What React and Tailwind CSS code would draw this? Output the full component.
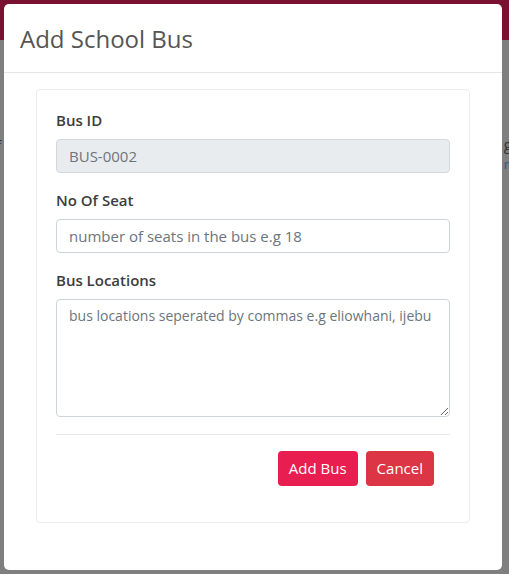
import React from "react";

const font = { fontFamily: '"Open Sans", "Noto Sans", Arial, sans-serif' };

function Field({ label, children }) {
  return (
    <div className="flex flex-col">
      <label className="text-[15px] font-semibold text-[#3d3d3d] leading-[22px] mb-[8px]">{label}</label>
      {children}
    </div>
  );
}

export default function App() {
  return (
    <div className="relative w-[509px] h-[574px] overflow-hidden bg-[#7f7f7f]" style={font}>
      {/* page behind the overlay */}
      <div className="h-[40px] bg-[#7a1130]" />
      <div className="flex justify-between pt-[94px] text-[15px] text-[#333]">
        <span className="-ml-[4px]">f</span>
        <span className="flex flex-col -mr-[3px] leading-[20px]">
          <span>g</span>
          <span className="text-[#2a5a8a] text-[13px]">n</span>
        </span>
      </div>

      {/* modal */}
      <div className="absolute left-[4px] top-[4px] w-[498px] h-[566px] bg-white rounded-[5px] flex flex-col">
        <div className="h-[69px] border-b border-[#e6e6e6] px-[16px] flex items-center">
          <h2 className="text-[24px] text-[#555] font-normal leading-none pt-[2px]">Add School Bus</h2>
        </div>
        <div className="px-[32px] pt-[16px]">
          <div className="border border-[#ececec] rounded-[4px] h-[434px] px-[19px] pt-[19px]">
            <div className="flex flex-col gap-[16px]">
              <Field label="Bus ID">
                <input
                  disabled
                  value="BUS-0002"
                  readOnly
                  className="h-[34px] rounded-[4px] border border-[#d4d8dc] bg-[#e9ecef] px-[12px] text-[15px] text-[#6c757d]"
                  style={font}
                />
              </Field>
              <Field label="No Of Seat">
                <input
                  placeholder="number of seats in the bus e.g 18"
                  className="h-[34px] rounded-[4px] border border-[#cfd4d9] bg-white px-[12px] text-[15px] text-[#495057] placeholder:text-[#6c757d] outline-none"
                  style={font}
                />
              </Field>
              <Field label="Bus Locations">
                <textarea
                  placeholder="bus locations seperated by commas e.g eliowhani, ijebu"
                  className="h-[118px] rounded-[4px] border border-[#cfd4d9] bg-white px-[12px] py-[5px] text-[14px] leading-[22px] text-[#495057] placeholder:text-[#6c757d] outline-none resize-y"
                  style={font}
                />
              </Field>
            </div>
            <div className="mt-[17px] border-t border-[#e8e8e8]" />
            <div className="flex justify-end gap-[8px] pr-[16px] pt-[16px]">
              <button className="h-[35px] px-[11px] rounded-[4px] bg-[#e91e50] text-white text-[15px]">Add Bus</button>
              <button className="h-[35px] px-[11px] rounded-[4px] bg-[#dc3545] text-white text-[15px]">Cancel</button>
            </div>
          </div>
        </div>
      </div>
    </div>
  );
}
